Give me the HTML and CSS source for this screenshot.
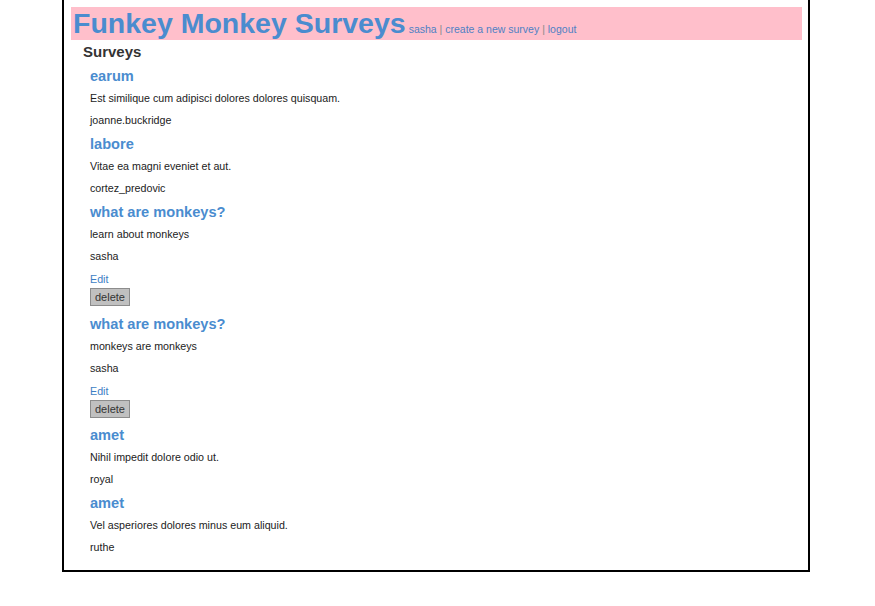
FILE: index.html
```html
<!DOCTYPE html>
<html>
<head>
<meta charset="utf-8">
<title>Funkey Monkey Surveys</title>
<link rel="stylesheet" href="styles.css">
</head>
<body>
<div class="page">
  <div class="header">
    <a class="brand" href="#">Funkey Monkey Surveys</a>
    <span class="nav"><a href="#">sasha</a> <span class="sep">|</span> <a href="#">create a new survey</a> <span class="sep">|</span> <a href="#">logout</a></span>
  </div>
  <h2 class="title">Surveys</h2>
  <div class="list">
    <div class="survey">
      <h3><a href="#">earum</a></h3>
      <p class="desc">Est similique cum adipisci dolores dolores quisquam.</p>
      <p class="author">joanne.buckridge</p>
    </div>
    <div class="survey">
      <h3><a href="#">labore</a></h3>
      <p class="desc">Vitae ea magni eveniet et aut.</p>
      <p class="author">cortez_predovic</p>
    </div>
    <div class="survey">
      <h3><a href="#">what are monkeys?</a></h3>
      <p class="desc">learn about monkeys</p>
      <p class="author">sasha</p>
      <a class="edit" href="#">Edit</a>
      <button class="delete">delete</button>
    </div>
    <div class="survey">
      <h3><a href="#">what are monkeys?</a></h3>
      <p class="desc">monkeys are monkeys</p>
      <p class="author">sasha</p>
      <a class="edit" href="#">Edit</a>
      <button class="delete">delete</button>
    </div>
    <div class="survey">
      <h3><a href="#">amet</a></h3>
      <p class="desc">Nihil impedit dolore odio ut.</p>
      <p class="author">royal</p>
    </div>
    <div class="survey">
      <h3><a href="#">amet</a></h3>
      <p class="desc">Vel asperiores dolores minus eum aliquid.</p>
      <p class="author">ruthe</p>
    </div>
  </div>
</div>
</body>
</html>
```
FILE: styles.css
```css
html, body {
  margin: 0;
  padding: 0;
  background: #fff;
}
body {
  font-family: "Liberation Sans", Arial, sans-serif;
  font-size: 10.7px;
  color: #222;
}
a {
  text-decoration: none;
}
.page {
  width: 731px;
  margin-left: 62px;
  border: 2px solid #000;
  border-top: 0;
  padding: 7px 6px 16px 7px;
}
.header {
  background: #ffbfcb;
  height: 33px;
  line-height: 33px;
  padding-left: 2px;
  white-space: nowrap;
}
.brand {
  font-size: 28.5px;
  font-weight: bold;
  color: #4a8ccf;
}
.nav {
  font-size: 10.5px;
  color: #8a8a8a;
}
.nav a {
  color: #4f7fc4;
}
.title {
  font-size: 15px;
  line-height: 18px;
  font-weight: bold;
  color: #333;
  margin: 3px 0 0 12px;
}
.list {
  display: flex;
  flex-direction: column;
  gap: 8px;
  margin: 6px 0 0 19px;
}
.survey {
  display: flex;
  flex-direction: column;
  align-items: flex-start;
}
.survey h3 {
  font-size: 14.6px;
  line-height: 18px;
  font-weight: bold;
  margin: 0 0 7px;
}
.survey h3 a {
  color: #4a8ccf;
}
.survey p {
  margin: 0;
  line-height: 13px;
}
.desc {
  margin-bottom: 9px !important;
}
.edit {
  margin-top: 10px;
  line-height: 13px;
  color: #3d7ec4;
}
.delete {
  margin: 2px 0 0.5px;
  font-family: "Liberation Sans", Arial, sans-serif;
  font-size: 11px;
  color: #333;
  background: #c0c0c0;
  border: 1px solid #8c8c8c;
  border-radius: 0;
  height: 18px;
  width: 40px;
  padding: 0;
}
```
